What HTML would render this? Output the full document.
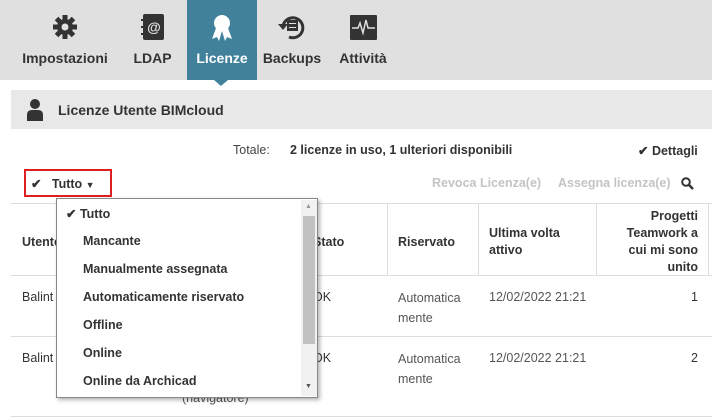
<!DOCTYPE html>
<html><head><style>
*{margin:0;padding:0;box-sizing:border-box}
body{width:712px;height:418px;overflow:hidden;background:#fff;font-family:"Liberation Sans",sans-serif;font-size:12.5px;color:#333;position:relative}
.nav{position:absolute;left:0;top:0;width:712px;height:80px;background:#e0e0e0}
.tab{position:absolute;top:0;height:80px;text-align:center;font-weight:bold;font-size:14px;color:#333}
.tab .lbl{position:absolute;top:50px;left:0;right:0}
.tab svg{position:absolute;top:12px;left:50%;margin-left:-15px}
.act{background:#41819c;color:#fff}
.a{position:absolute;white-space:nowrap}
.b{font-weight:bold}
.hl{position:absolute;height:1px;background:#ddd}
.vl{position:absolute;width:1px;background:#ddd}
</style></head><body>
<div class="nav">
 <div class="tab" style="left:10px;width:110px"><svg width="30" height="30" viewBox="0 0 30 30"><g fill="#333" transform="translate(15 15)"><circle r="8"/><rect x="-2.5" y="-12" width="5" height="24"/><rect x="-2.5" y="-12" width="5" height="24" transform="rotate(45)"/><rect x="-2.5" y="-12" width="5" height="24" transform="rotate(90)"/><rect x="-2.5" y="-12" width="5" height="24" transform="rotate(135)"/><circle r="3.5" fill="#e0e0e0"/></g></svg><div class="lbl">Impostazioni</div></div>
 <div class="tab" style="left:125px;width:55px"><svg width="30" height="30" viewBox="0 0 30 30"><rect x="5" y="2" width="21" height="26" rx="2" fill="#333"/><rect x="3" y="7" width="3" height="2" fill="#333"/><rect x="3" y="14" width="3" height="2" fill="#333"/><rect x="3" y="21" width="3" height="2" fill="#333"/><text x="16" y="20" font-size="14" fill="#e0e0e0" text-anchor="middle" font-family="Liberation Sans" font-weight="bold">@</text></svg><div class="lbl">LDAP</div></div>
 <div class="tab act" style="left:187px;width:70px"><svg width="30" height="30" viewBox="0 0 30 30"><circle cx="15" cy="11" r="8" fill="#fff"/><path d="M9 16 L5 27 L10 25 L12 29 L15 19 L18 29 L20 25 L25 27 L21 16Z" fill="#fff"/></svg><div class="lbl">Licenze</div></div>
 <div class="tab" style="left:262px;width:60px"><svg width="30" height="30" viewBox="0 0 30 30"><path d="M6 14 A10 10 0 1 1 12 25" stroke="#333" stroke-width="3" fill="none"/><path d="M1 12 L6 18 L11 12Z" fill="#333"/><rect x="10" y="8" width="11" height="11" fill="#333"/><rect x="12" y="11" width="7" height="1" fill="#e0e0e0"/><rect x="12" y="15" width="7" height="1" fill="#e0e0e0"/></svg><div class="lbl">Backups</div></div>
 <div class="tab" style="left:333px;width:60px"><svg width="30" height="30" viewBox="0 0 30 30"><rect x="2" y="3" width="27" height="25" rx="1" fill="#333"/><path d="M4 16 H10 L12 11 L15 21 L18 8 L20 16 H27" stroke="#e0e0e0" stroke-width="1.5" fill="none"/></svg><div class="lbl">Attività</div></div>
</div>
<div style="position:absolute;left:214px;top:80px;width:0;height:0;border-left:7px solid transparent;border-right:7px solid transparent;border-top:6px solid #41819c"></div>
<div style="position:absolute;left:11px;top:90px;width:701px;height:39px;background:#e8e8e8"></div>
<svg class="a" style="left:26px;top:98px" width="18" height="24" viewBox="0 0 18 24"><circle cx="9" cy="6" r="5" fill="#333"/><path d="M1 23 V17 Q1 12 6 12 H12 Q17 12 17 17 V23Z" fill="#333"/></svg>
<div class="a b" style="left:58px;top:102px;font-size:14px">Licenze Utente BIMcloud</div>
<div class="a" style="left:233px;top:143px;color:#444">Totale:</div>
<div class="a b" style="left:290px;top:143px">2 licenze in uso, 1 ulteriori disponibili</div>
<div class="a b" style="left:638px;top:143px">✔ Dettagli</div>
<div class="a" style="left:24px;top:169px;width:88px;height:28px;border:2px solid #e02020"></div>
<div class="a b" style="left:31px;top:176px">✔ &nbsp;&nbsp;Tutto <span style="font-size:9px">▼</span></div>
<div class="a b" style="left:432px;top:176px;color:#c4c4c4">Revoca Licenza(e)</div>
<div class="a b" style="left:558px;top:176px;color:#c4c4c4">Assegna licenza(e)</div>
<svg class="a" style="left:681px;top:177px" width="13" height="13" viewBox="0 0 13 13"><circle cx="5" cy="5" r="3.8" stroke="#333" stroke-width="2" fill="none"/><path d="M8 8 L12 12" stroke="#333" stroke-width="2.5"/></svg>
<div class="hl" style="left:11px;top:203px;width:701px"></div>
<div class="hl" style="left:11px;top:275px;width:701px"></div>
<div class="hl" style="left:11px;top:336px;width:701px"></div>
<div class="hl" style="left:11px;top:416px;width:701px"></div>
<div class="vl" style="left:387px;top:204px;height:71px"></div>
<div class="vl" style="left:478px;top:204px;height:71px"></div>
<div class="vl" style="left:596px;top:204px;height:71px"></div>
<div class="vl" style="left:708px;top:204px;height:71px"></div>
<div class="a b" style="left:22px;top:235px">Utente</div>
<div class="a b" style="left:313px;top:235px">Stato</div>
<div class="a b" style="left:398px;top:235px">Riservato</div>
<div class="a b" style="left:489px;top:225px;line-height:17px">Ultima volta<br>attivo</div>
<div class="a b" style="left:598px;width:100px;top:208px;line-height:17px;text-align:right">Progetti<br>Teamwork a<br>cui mi sono<br>unito</div>
<div class="a" style="left:22px;top:290px">Balint</div>
<div class="a" style="left:313px;top:290px">OK</div>
<div class="a" style="left:398px;top:288px;line-height:20px;color:#555">Automatica<br>mente</div>
<div class="a" style="left:489px;top:290px;color:#555">12/02/2022 21:21</div>
<div class="a" style="left:680px;width:18px;top:290px;text-align:right">1</div>
<div class="a" style="left:22px;top:351px">Balint</div>
<div class="a" style="left:313px;top:351px">OK</div>
<div class="a" style="left:398px;top:349px;line-height:20px;color:#555">Automatica<br>mente</div>
<div class="a" style="left:489px;top:351px;color:#555">12/02/2022 21:21</div>
<div class="a" style="left:680px;width:18px;top:351px;text-align:right">2</div>
<div class="a" style="left:182px;top:391px;color:#555">(navigatore)</div>
<div class="a" style="left:56px;top:198px;width:262px;height:200px;background:#fff;border:1px solid #888;box-shadow:2px 2px 4px rgba(0,0,0,.3)">
 <div class="a" style="left:244px;top:1px;width:16px;height:196px;background:#f1f1f1"></div>
 <div class="a" style="left:246px;top:17px;width:12px;height:128px;background:#c1c1c1"></div>
 <div class="a" style="left:248px;top:4px;font-size:7px;color:#999">▲</div>
 <div class="a" style="left:248px;top:184px;font-size:7px;color:#555">▼</div>
 <div class="a b" style="left:9px;top:7px">✔ Tutto</div>
 <div class="a b" style="left:26px;top:35px">Mancante</div>
 <div class="a b" style="left:26px;top:63px">Manualmente assegnata</div>
 <div class="a b" style="left:26px;top:91px">Automaticamente riservato</div>
 <div class="a b" style="left:26px;top:119px">Offline</div>
 <div class="a b" style="left:26px;top:147px">Online</div>
 <div class="a b" style="left:26px;top:175px">Online da Archicad</div>
</div>
</body></html>
